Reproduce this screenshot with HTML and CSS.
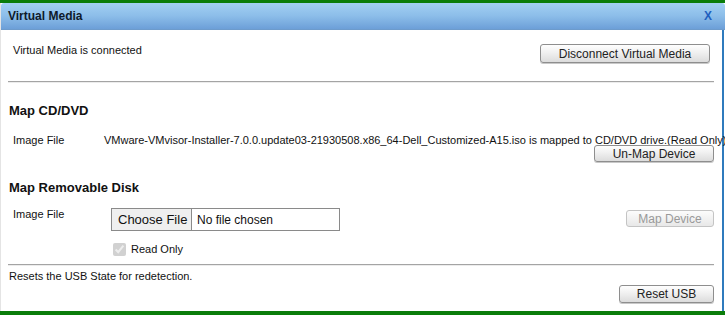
FILE: index.html
```html
<!DOCTYPE html>
<html>
<head>
<meta charset="utf-8">
<link rel="stylesheet" href="styles.css">
</head>
<body>
<div class="dialog">
  <div class="titlebar">
    <span class="title">Virtual Media</span>
    <span class="close">X</span>
  </div>
  <div class="content">
    <div class="status-row">
      <span class="status">Virtual Media is connected</span>
      <button class="btn btn-disconnect">Disconnect Virtual Media</button>
    </div>
    <div class="rule rule-top"></div>

    <h2 class="heading heading-cd">Map CD/DVD</h2>
    <div class="cd-row">
      <span class="label label-cd">Image File</span>
      <span class="filename">VMware-VMvisor-Installer-7.0.0.update03-21930508.x86_64-Dell_Customized-A15.iso is mapped to CD/DVD drive.(Read Only)</span>
    </div>
    <div class="btn-line">
      <button class="btn btn-unmap">Un-Map Device</button>
    </div>

    <h2 class="heading heading-disk">Map Removable Disk</h2>
    <div class="disk-row">
      <span class="label label-disk">Image File</span>
      <div class="file-col">
        <input class="file" type="file">
      </div>
      <button class="btn btn-map" disabled>Map Device</button>
    </div>
    <label class="ro-row">
      <input class="ro-check" type="checkbox" checked disabled>
      <span class="ro-text">Read Only</span>
    </label>
    <div class="rule rule-bottom"></div>

    <div class="reset-text">Resets the USB State for redetection.</div>
    <div class="btn-line">
      <button class="btn btn-reset">Reset USB</button>
    </div>
  </div>
</div>
</body>
</html>
```

FILE: styles.css
```css
* { box-sizing: border-box; }
html, body { margin: 0; padding: 0; }
body {
  width: 725px;
  height: 315px;
  overflow: hidden;
  background: #0a7d0a;
  font-family: "Liberation Sans", Arial, sans-serif;
  color: #111;
}
.dialog {
  margin-top: 3px;
  height: 308px;
  background: #fff;
  border-left: 1px solid #e4e4e4;
  display: flex;
  flex-direction: column;
}
.titlebar {
  height: 27px;
  flex: none;
  display: flex;
  align-items: center;
  justify-content: space-between;
  padding: 0 13px 0 7px;
  background: linear-gradient(#a2d0f3, #8cbde9 50%, #6c9fd8);
  border-radius: 3px 3px 0 0;
  border-bottom: 1px solid #6d9bcc;
}
.title {
  font-size: 12px;
  font-weight: bold;
  color: #0e1a2a;
}
.close {
  font-size: 12px;
  font-weight: bold;
  color: #1f5fbf;
}
.content {
  flex: 1;
  padding: 0 8px 0 7px;
  border-right: 2px solid #2f7bbd;
  margin-right: 1px;
  font-size: 11px;
  line-height: 13px;
}
.status-row {
  display: flex;
  justify-content: space-between;
  align-items: flex-start;
  margin-top: 14px;
  padding-left: 5px;
}
.btn {
  font-family: "Liberation Sans", Arial, sans-serif;
  font-size: 12px;
  color: #222;
  background: linear-gradient(#fefefe, #f0f0f0 45%, #dcdcdc);
  border: 1px solid #8e8e8e;
  border-radius: 3px;
  padding: 0;
  line-height: 14px;
  box-shadow: 0 1px 0 #c8c8c8;
}
.btn-disconnect {
  width: 170px;
  height: 19px;
  margin-right: 4px;
}
.rule {
  height: 2px;
  border-top: 1px solid #a4a4a4;
  border-bottom: 1px solid #ececec;
  margin-right: 0;
}
.rule-top { margin-top: 18px; }
.heading {
  margin: 20px 0 0 1px;
  font-size: 13px;
  line-height: 15px;
  font-weight: bold;
  color: #111;
}
.cd-row {
  display: flex;
  margin-top: 16px;
  padding-left: 5px;
  white-space: nowrap;
}
.label-cd { width: 91px; flex: none; }
.filename { color: #111; }
.btn-line {
  display: flex;
  justify-content: flex-end;
}
.btn-unmap {
  width: 120px;
  height: 17px;
  margin-top: -2px;
}
.heading-disk { margin-top: 18px; }
.disk-row {
  display: flex;
  align-items: flex-start;
  margin-top: 13px;
  padding-left: 5px;
}
.label-disk { width: 98px; flex: none; }
.file-col { flex: 1; }
.file {
  width: 229px;
  height: 23px;
  border: 1px solid #8a8a8a;
  font-family: "Liberation Sans", Arial, sans-serif;
  font-size: 12px;
  color: #111;
  padding: 0;
  margin: 0;
  background: #fff;
}
.file::file-selector-button {
  height: 21px;
  width: 80px;
  margin: 0 5px 0 0;
  font-family: "Liberation Sans", Arial, sans-serif;
  font-size: 13px;
  color: #111;
  background: #efefef;
  border: none;
  border-right: 1px solid #8a8a8a;
  border-radius: 0;
}
.btn-map {
  width: 88px;
  height: 17px;
  margin-top: 2px;
  color: #999;
  border-color: #c4c4c4;
  background: linear-gradient(#fcfcfc, #f2f2f2 50%, #e8e8e8);
  box-shadow: none;
}
.ro-row {
  display: flex;
  align-items: center;
  margin-top: 12px;
  padding-left: 105px;
}
.ro-check {
  width: 13px;
  height: 13px;
  margin: 0 5px 0 0;
}
.ro-text { font-size: 11px; }
.rule-bottom { margin-top: 8px; }
.reset-text {
  margin-top: 4px;
  padding-left: 1px;
}
.btn-reset {
  width: 95px;
  height: 18px;
  margin-top: 2px;
}
```
